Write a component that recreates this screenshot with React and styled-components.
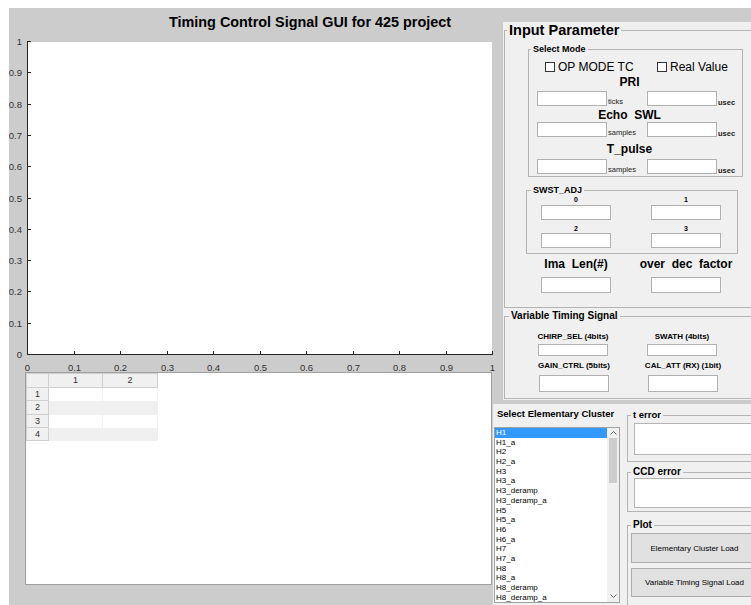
import React from "react";
import styled, { createGlobalStyle } from "styled-components";

const FONT = `"Liberation Sans", Arial, sans-serif`;

const GlobalStyle = createGlobalStyle`
  html, body { background: #ffffff; }
  body {
    margin: 8px 0 0 9px;
    font-family: ${FONT};
    overflow: hidden;
  }
`;

/* ---------- figure window ---------- */

const Figure = styled.div`
  width: 742px;
  height: 597px;
  background: #cccccc;
  display: grid;
  grid-template-columns: 484px 1fr;
  overflow: hidden;
`;

const LeftColumn = styled.div`
  display: flex;
  flex-direction: column;
`;

const Title = styled.h1`
  margin: 0;
  height: 28px;
  padding-left: 160px;
  font: bold 14.4px/28px ${FONT};
  color: #000;
  white-space: nowrap;
`;

const AxesCanvas = styled.svg`
  display: block;
  overflow: visible;
  font-family: ${FONT};
  font-size: 9.5px;
`;

/* ---------- data table ---------- */

const TableBox = styled.div`
  margin-left: 16px;
  width: 467px;
  height: 213px;
  box-sizing: border-box;
  background: #ffffff;
  border: 1px solid #a0a0a0;
`;

const DataTable = styled.table`
  border-collapse: collapse;
  table-layout: fixed;
  width: 131px;
  font: 9px ${FONT};
  color: #333;
`;

const HeadCell = styled.th`
  height: ${(p) => p.$h}px;
  padding: 0;
  font-weight: normal;
  line-height: 9px;
  text-align: center;
  background: #f0f0f0;
  border: 1px solid #cfcfcf;
`;

const DataCell = styled.td`
  padding: 0;
  background: ${(p) => (p.$band ? "#f0f0f0" : "#ffffff")};
  border-right: 1px solid #f0f0f0;
`;

/* ---------- right side panels ---------- */

const RightColumn = styled.div`
  display: flex;
  flex-direction: column;
  padding-top: 14px;
  min-width: 0;
`;

const ParamArea = styled.div`
  margin-left: 10px;
  width: 270px;
  height: 378px;
  box-sizing: border-box;
  padding-left: 1px;
  background: #f0f0f0;
  display: flex;
  flex-direction: column;
`;

const Group = styled.fieldset`
  margin: ${(p) => p.$mt || 0}px 0 0 ${(p) => p.$ml || 0}px;
  padding: 0 0 ${(p) => p.$pb || 0}px 0;
  width: ${(p) => p.$w}px;
  box-sizing: border-box;
  min-width: 0;
  border: 1px solid #b4b4b4;
`;

const Caption = styled.legend`
  margin-left: ${(p) => p.$indent}px;
  padding: 0 2px;
  font: bold ${(p) => p.$size}px/${(p) => p.$lh}px ${FONT};
  color: #000;
  white-space: nowrap;
`;

const CheckRow = styled.div`
  margin-top: 6px;
  padding-left: 16px;
  height: 12px;
  display: grid;
  grid-template-columns: 112px auto;
  align-items: center;
`;

const Check = styled.label`
  display: flex;
  align-items: center;
  gap: 3px;
  font-size: 12px;
  line-height: 12px;
  color: #000;
  white-space: nowrap;
`;

const CheckBox = styled.span`
  width: 10px;
  height: 10px;
  box-sizing: border-box;
  border: 1px solid #333;
  background: #fff;
`;

const Heading = styled.div`
  margin: ${(p) => p.$mt}px 0 0 8px;
  width: 185px;
  height: 13px;
  font: bold 12px/13px ${FONT};
  text-align: center;
  white-space: pre;
  color: #000;
`;

const FieldRow = styled.div`
  margin: ${(p) => p.$mt}px 0 0 8px;
  display: grid;
  grid-template-columns: 70px 40px 70px auto;
  height: 15px;
`;

const Unit = styled.span`
  align-self: end;
  padding-left: 1px;
  font-size: 7.5px;
  font-weight: ${(p) => (p.$strong ? "bold" : "normal")};
  line-height: 8px;
  color: #222;
  white-space: nowrap;
  transform: translateY(${(p) => (p.$strong ? 1 : 0)}px);
`;

const Field = styled.input`
  display: block;
  width: 70px;
  height: ${(p) => p.$h || 15}px;
  box-sizing: border-box;
  margin: 0;
  padding: 0 2px;
  border: 1px solid #b0b0b0;
  background: #fff;
  outline: none;
  font: 9px ${FONT};
`;

const PairGrid = styled.div`
  margin: ${(p) => p.$mt || 0}px 0 0 ${(p) => p.$ml}px;
  display: grid;
  grid-template-columns: 70px 70px;
  column-gap: ${(p) => p.$gap}px;
`;

const PairLabel = styled.div`
  display: flex;
  justify-content: center;
  height: ${(p) => p.$lh}px;
  font: bold ${(p) => p.$size}px/${(p) => p.$lh}px ${FONT};
  white-space: pre;
  color: #000;
`;

/* ---------- cluster list + status panels ---------- */

const LowerArea = styled.div`
  margin-top: 4px;
  flex: 1;
  background: #f0f0f0;
  display: grid;
  grid-template-columns: 134px 1fr;
  min-height: 0;
`;

const ListColumn = styled.div`
  display: flex;
  flex-direction: column;
`;

const ListTitle = styled.div`
  padding: 4px 0 0 4px;
  font: bold 9.5px/12px ${FONT};
  color: #000;
  white-space: nowrap;
`;

const ListBox = styled.div`
  margin: 7px 0 0 1px;
  width: 126px;
  height: 176px;
  box-sizing: border-box;
  border: 1px solid #a0a0a0;
  background: #fff;
  display: flex;
  overflow: hidden;
`;

const ListItems = styled.ul`
  margin: 0;
  padding: 0;
  list-style: none;
  flex: 1;
  min-width: 0;
`;

const ListItem = styled.li`
  height: 9.7px;
  padding-left: 1px;
  font: 8px/9.7px ${FONT};
  color: ${(p) => (p.$selected ? "#fff" : "#000")};
  background: ${(p) => (p.$selected ? "#3399ff" : "transparent")};
  white-space: nowrap;
`;

const ScrollTrack = styled.div`
  width: 12px;
  background: #f0f0f0;
  display: flex;
  flex-direction: column;
  align-items: center;
`;

const ScrollArrow = styled.svg`
  display: block;
  margin: ${(p) => (p.$down ? "auto 0 4px" : "3px 0 0")};
  flex: none;
`;

const ScrollThumb = styled.div`
  margin-top: 3px;
  width: 8px;
  height: 45px;
  background: #cdcdcd;
`;

const SideColumn = styled.div`
  display: flex;
  flex-direction: column;
`;

const MessageBox = styled.div`
  margin: ${(p) => p.$mt}px 0 0 6px;
  width: 130px;
  height: ${(p) => p.$h}px;
  box-sizing: border-box;
  background: #fff;
  border: 1px solid #b4b4b4;
`;

const PushButton = styled.button`
  display: block;
  margin: ${(p) => p.$mt}px 0 0 3px;
  width: 127px;
  height: ${(p) => p.$h}px;
  padding: 0;
  box-sizing: border-box;
  background: #e1e1e1;
  border: 1px solid #adadad;
  font: 8px ${FONT};
  color: #000;
  white-space: nowrap;
`;

/* ---------- axes ---------- */

const TICKS = Array.from({ length: 11 }, (_, i) => i / 10);
const tickText = (t) => (t === 0 ? "0" : t === 1 ? "1" : t.toFixed(1));

function Axes() {
  const left = 18;
  const right = 483;
  const bottom = 319;
  const top = 6;
  return (
    <AxesCanvas width="484" height="336" viewBox="0 0 484 336">
      <rect x={left} y={top} width={right - left} height={bottom - top} fill="#ffffff" />
      {TICKS.map((t) => {
        const y = Math.round(bottom - t * (bottom - top)) - 0.5;
        return (
          <g key={`y${t}`}>
            <line x1={left} x2={left + 4} y1={y} y2={y} stroke="#262626" />
            <text x={13} y={y} textAnchor="end" dominantBaseline="central" fill="#333">
              {tickText(t)}
            </text>
          </g>
        );
      })}
      {TICKS.map((t) => {
        const x = Math.round(left + t * (right - left)) + 0.5;
        return (
          <g key={`x${t}`}>
            <line x1={x} x2={x} y1={bottom} y2={bottom - 4} stroke="#262626" />
            <text x={x} y={331} textAnchor="middle" dominantBaseline="central" fill="#333">
              {tickText(t)}
            </text>
          </g>
        );
      })}
      <line x1={left + 0.5} x2={left + 0.5} y1={top} y2={bottom} stroke="#262626" />
      <line x1={left} x2={right} y1={bottom - 0.5} y2={bottom - 0.5} stroke="#262626" />
    </AxesCanvas>
  );
}

/* ---------- content ---------- */

const CLUSTERS = [
  "H1", "H1_a", "H2", "H2_a", "H3", "H3_a", "H3_deramp", "H3_deramp_a",
  "H5", "H5_a", "H6", "H6_a", "H7", "H7_a", "H8", "H8_a", "H8_deramp",
  "H8_deramp_a",
];

const PARAM_ROWS = [
  { title: "PRI", unit: "ticks", mtTitle: 3, mtRow: 2 },
  { title: "Echo  SWL", unit: "samples", mtTitle: 3, mtRow: 0 },
  { title: "T_pulse", unit: "samples", mtTitle: 6, mtRow: 3 },
];

const TABLE_ROWS = [
  { n: 1, h: 12 },
  { n: 2, h: 13 },
  { n: 3, h: 12 },
  { n: 4, h: 12 },
];

function Chevron({ down }) {
  return (
    <ScrollArrow $down={down} width="7" height="4" viewBox="0 0 7 4">
      <path
        d={down ? "M0.5 0.5 L3.5 3.5 L6.5 0.5" : "M0.5 3.5 L3.5 0.5 L6.5 3.5"}
        fill="none"
        stroke="#606060"
        strokeWidth="1"
      />
    </ScrollArrow>
  );
}

export default function App() {
  return (
    <>
      <GlobalStyle />
      <Figure>
        <LeftColumn>
          <Title>Timing Control Signal GUI for 425 project</Title>
          <Axes />
          <TableBox>
            <DataTable>
              <colgroup>
                <col style={{ width: 22 }} />
                <col style={{ width: 54 }} />
                <col style={{ width: 55 }} />
              </colgroup>
              <thead>
                <tr>
                  <HeadCell $h={13} />
                  <HeadCell $h={13}>1</HeadCell>
                  <HeadCell $h={13}>2</HeadCell>
                </tr>
              </thead>
              <tbody>
                {TABLE_ROWS.map(({ n, h }) => (
                  <tr key={n}>
                    <HeadCell $h={h}>{n}</HeadCell>
                    <DataCell $band={n % 2 === 0} />
                    <DataCell $band={n % 2 === 0} />
                  </tr>
                ))}
              </tbody>
            </DataTable>
          </TableBox>
        </LeftColumn>

        <RightColumn>
          <ParamArea>
            <Group $w={268} $pb={14}>
              <Caption $indent={2} $size={14.5} $lh={17}>Input Parameter</Caption>

              <Group $w={215} $ml={23} $mt={4} $pb={2}>
                <Caption $indent={2} $size={9} $lh={12}>Select Mode</Caption>
                <CheckRow>
                  <Check><CheckBox />OP MODE TC</Check>
                  <Check><CheckBox />Real Value</Check>
                </CheckRow>
                {PARAM_ROWS.map((row) => (
                  <React.Fragment key={row.title}>
                    <Heading $mt={row.mtTitle}>{row.title}</Heading>
                    <FieldRow $mt={row.mtRow}>
                      <Field />
                      <Unit>{row.unit}</Unit>
                      <Field />
                      <Unit $strong>usec</Unit>
                    </FieldRow>
                  </React.Fragment>
                ))}
              </Group>

              <Group $w={212} $ml={21} $mt={7} $pb={5}>
                <Caption $indent={4} $size={9} $lh={12}>SWST_ADJ</Caption>
                <PairGrid $ml={14} $gap={40}>
                  <PairLabel $size={7} $lh={8}>0</PairLabel>
                  <PairLabel $size={7} $lh={8}>1</PairLabel>
                </PairGrid>
                <PairGrid $ml={14} $gap={40} $mt={1}>
                  <Field />
                  <Field />
                </PairGrid>
                <PairGrid $ml={14} $gap={40} $mt={5}>
                  <PairLabel $size={7} $lh={8}>2</PairLabel>
                  <PairLabel $size={7} $lh={8}>3</PairLabel>
                </PairGrid>
                <PairGrid $ml={14} $gap={40}>
                  <Field />
                  <Field />
                </PairGrid>
              </Group>

              <PairGrid $ml={36} $gap={40} $mt={3}>
                <PairLabel $size={12} $lh={14}>{"Ima  Len(#)"}</PairLabel>
                <PairLabel $size={12} $lh={14}>{"over  dec  factor"}</PairLabel>
              </PairGrid>
              <PairGrid $ml={36} $gap={40} $mt={6}>
                <Field $h={16} />
                <Field $h={16} />
              </PairGrid>
            </Group>

            <Group $w={268} $mt={2} $pb={6}>
              <Caption $indent={4} $size={10} $lh={12}>Variable Timing Signal</Caption>
              <PairGrid $ml={33} $gap={39} $mt={10}>
                <PairLabel $size={8} $lh={10}>CHIRP_SEL (4bits)</PairLabel>
                <PairLabel $size={8} $lh={10}>SWATH (4bits)</PairLabel>
              </PairGrid>
              <PairGrid $ml={33} $gap={39} $mt={2}>
                <Field $h={12} />
                <Field $h={12} />
              </PairGrid>
              <PairGrid $ml={34} $gap={39} $mt={5}>
                <PairLabel $size={8} $lh={10}>GAIN_CTRL (5bits)</PairLabel>
                <PairLabel $size={8} $lh={10}>CAL_ATT (RX) (1bit)</PairLabel>
              </PairGrid>
              <PairGrid $ml={34} $gap={39} $mt={4}>
                <Field $h={17} />
                <Field $h={17} />
              </PairGrid>
            </Group>
          </ParamArea>

          <LowerArea>
            <ListColumn>
              <ListTitle>Select Elementary Cluster</ListTitle>
              <ListBox>
                <ListItems>
                  {CLUSTERS.map((name, i) => (
                    <ListItem key={name} $selected={i === 0}>{name}</ListItem>
                  ))}
                </ListItems>
                <ScrollTrack>
                  <Chevron />
                  <ScrollThumb />
                  <Chevron down />
                </ScrollTrack>
              </ListBox>
            </ListColumn>

            <SideColumn>
              <Group $w={140} $mt={6} $pb={6}>
                <Caption $indent={3} $size={9.5} $lh={10}>t error</Caption>
                <MessageBox $mt={3} $h={32} />
              </Group>
              <Group $w={140} $mt={5} $pb={3}>
                <Caption $indent={3} $size={10} $lh={10}>CCD error</Caption>
                <MessageBox $mt={1} $h={30} />
              </Group>
              <Group $w={140} $mt={8} $pb={10}>
                <Caption $indent={3} $size={10} $lh={10}>Plot</Caption>
                <PushButton $mt={3} $h={30}>Elementary Cluster Load</PushButton>
                <PushButton $mt={5} $h={29}>Variable Timing Signal Load</PushButton>
              </Group>
            </SideColumn>
          </LowerArea>
        </RightColumn>
      </Figure>
    </>
  );
}
